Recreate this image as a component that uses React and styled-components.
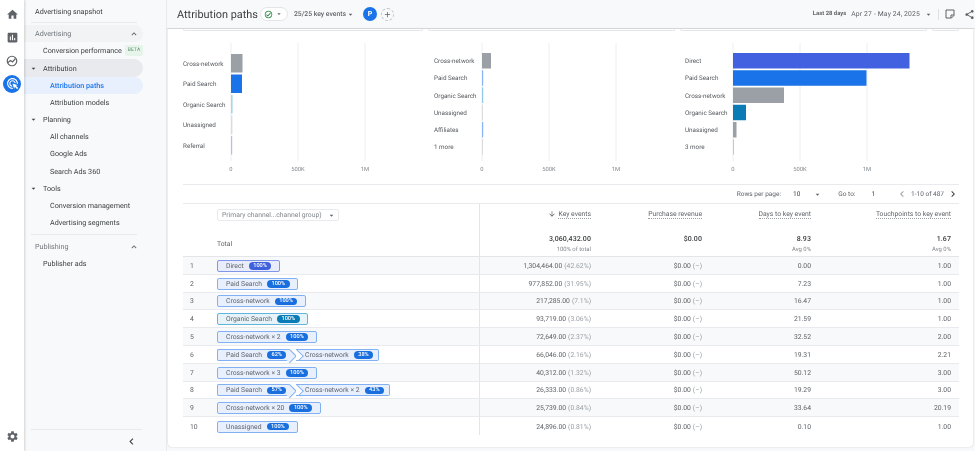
import React from 'react';
import styled, { createGlobalStyle } from 'styled-components';
import {
  MdHome,
  MdAssessment,
  MdAdsClick,
  MdSettings,
  MdChevronLeft,
  MdChevronRight,
  MdExpandLess,
  MdArrowDropDown,
  MdArrowDownward,
  MdAdd,
  MdOutlineCheckCircle,
  MdShare,
} from 'react-icons/md';

const GlobalStyle = createGlobalStyle`
  html, body { margin: 0; padding: 0; background: #f8f9fa; }
  body {
    font-family: Roboto, "Liberation Sans", sans-serif;
    color: #3c4043;
    text-rendering: geometricPrecision;
  }
  * { box-sizing: border-box; }
`;

const NAV = [
  { type: 'section', label: 'Advertising' },
  { type: 'link', label: 'Conversion performance', beta: true },
  { type: 'group', label: 'Attribution', active: true },
  { type: 'sub', label: 'Attribution paths', selected: true },
  { type: 'sub', label: 'Attribution models' },
  { type: 'group', label: 'Planning' },
  { type: 'sub', label: 'All channels' },
  { type: 'sub', label: 'Google Ads' },
  { type: 'sub', label: 'Search Ads 360' },
  { type: 'group', label: 'Tools' },
  { type: 'sub', label: 'Conversion management' },
  { type: 'sub', label: 'Advertising segments' },
];

const CHARTS = [
  {
    rowTop: 23,
    step: 20.5,
    barH: 18.5,
    bars: [
      ['Cross-network', 11.5, '#9aa0a6'],
      ['Paid Search', 11, '#1a73e8'],
      ['Organic Search', 1.6, '#a8d5ec'],
      ['Unassigned', 1.4, '#dadce0'],
      ['Referral', 1.2, '#c5b5f0'],
    ],
  },
  {
    rowTop: 22,
    step: 17.25,
    barH: 15.5,
    bars: [
      ['Cross-network', 9, '#9aa0a6'],
      ['Paid Search', 1.2, '#8ab4f8'],
      ['Organic Search', 1.2, '#90c8e8'],
      ['Unassigned', 1, '#dadce0'],
      ['Affiliates', 1.2, '#8ab4f8'],
      ['1 more', 1, '#dadce0'],
    ],
  },
  {
    rowTop: 22,
    step: 17.25,
    barH: 15.5,
    bars: [
      ['Direct', 176.5, '#4161e0'],
      ['Paid Search', 133.5, '#1a73e8'],
      ['Cross-network', 51, '#9aa0a6'],
      ['Organic Search', 13, '#0b7bb5'],
      ['Unassigned', 3.5, '#9aa0a6'],
      ['3 more', 1, '#c4c7cc'],
    ],
  },
];

const ROWS = [
  { path: [{ label: 'Direct', pct: 100, tone: 'direct' }], key: '1,304,464.00', share: '42.62%', days: '0.00', touch: '1.00' },
  { path: [{ label: 'Paid Search', pct: 100 }], key: '977,852.00', share: '31.95%', days: '7.23', touch: '1.00' },
  { path: [{ label: 'Cross-network', pct: 100 }], key: '217,285.00', share: '7.1%', days: '16.47', touch: '1.00' },
  { path: [{ label: 'Organic Search', pct: 100, tone: 'organic' }], key: '93,719.00', share: '3.06%', days: '21.59', touch: '1.00' },
  { path: [{ label: 'Cross-network × 2', pct: 100 }], key: '72,649.00', share: '2.37%', days: '32.52', touch: '2.00' },
  { path: [{ label: 'Paid Search', pct: 62 }, { label: 'Cross-network', pct: 38 }], key: '66,046.00', share: '2.16%', days: '19.31', touch: '2.21' },
  { path: [{ label: 'Cross-network × 3', pct: 100 }], key: '40,312.00', share: '1.32%', days: '50.12', touch: '3.00' },
  { path: [{ label: 'Paid Search', pct: 57 }, { label: 'Cross-network × 2', pct: 43 }], key: '26,333.00', share: '0.86%', days: '19.29', touch: '3.00' },
  { path: [{ label: 'Cross-network × 20', pct: 100 }], key: '25,739.00', share: '0.84%', days: '33.64', touch: '20.19' },
  { path: [{ label: 'Unassigned', pct: 100 }], key: '24,896.00', share: '0.81%', days: '0.10', touch: '1.00' },
];

const TONES = {
  direct: { bg: '#e9edfb', line: '#7f97ea', badge: '#3f62dc' },
  paid: { bg: '#e8f0fe', line: '#82b1f3', badge: '#1a6fdf' },
  organic: { bg: '#e6f3f9', line: '#62b4dc', badge: '#0b7bb5' },
};

const Page = styled.div`
  display: flex;
  width: 975px;
  height: 451px;
  overflow: hidden;
  will-change: transform;
`;

const Rail = styled.nav`
  display: flex;
  flex-direction: column;
  align-items: center;
  flex: 0 0 24px;
  padding: 3px 0 7px;
  background: #fff;
  box-shadow: 1px 0 2px rgba(60, 64, 67, 0.2);
  z-index: 2;
`;

const RailSlot = styled.div`
  display: flex;
  align-items: center;
  justify-content: center;
  width: 18px;
  height: 23px;
  color: #5f6368;
  font-size: 13px;
`;

const RailActive = styled.div`
  display: flex;
  align-items: center;
  justify-content: center;
  width: 18px;
  height: 18px;
  margin-top: 2.5px;
  border-radius: 50%;
  background: #1a73e8;
  color: #fff;
  font-size: 13px;
`;

const RailFoot = styled(RailSlot)`
  margin-top: auto;
  height: 16px;
`;

const Sidebar = styled.aside`
  display: flex;
  flex-direction: column;
  flex: 0 0 143px;
  padding-top: 2.9px;
  background: #f8f9fa;
  border-right: 1px solid #e8eaed;
`;

const NavColumn = styled.div`
  width: 119px;
`;

const NavRow = styled.div`
  position: relative;
  display: flex;
  align-items: center;
  height: 17.2px;
  padding-left: ${(p) => p.$indent}px;
  padding-right: 4px;
  border-radius: 0 9px 9px 0;
  font-size: 7.2px;
  color: ${(p) => (p.$selected ? '#1a73e8' : p.$muted ? '#70757a' : '#3c4043')};
  font-weight: ${(p) => (p.$selected ? 500 : 400)};
  background: ${(p) => (p.$selected ? '#e8f0fe' : p.$active ? '#e8eaed' : p.$soft ? '#f1f3f4' : 'transparent')};
  white-space: nowrap;
`;

const NavDivider = styled.div`
  height: 1px;
  margin: ${(p) => p.$margin};
  margin-left: 7px;
  width: 106px;
  background: #e8eaed;
`;

const Caret = styled.span`
  position: absolute;
  left: 5px;
  top: 50%;
  margin-top: -4.5px;
  display: flex;
  font-size: 9px;
  color: #3c4043;
`;

const Beta = styled.span`
  margin-left: auto;
  margin-right: -4px;
  padding: 3px 2.5px;
  border-radius: 2px;
  background: #e6f4ea;
  color: #5f8f70;
  font-size: 5px;
  line-height: 5px;
  letter-spacing: 0.2px;
`;

const Collapse = styled.span`
  margin-left: auto;
  display: flex;
  font-size: 10px;
  color: #5f6368;
`;

const SideFoot = styled.div`
  display: flex;
  justify-content: flex-end;
  align-items: center;
  height: 22px;
  margin-top: auto;
  margin-left: 7px;
  width: 111px;
  border-top: 1px solid #e8eaed;
  padding: 2px 4px 0 0;
  color: #3c4043;
  font-size: 13px;
`;

const Main = styled.main`
  display: flex;
  flex-direction: column;
  flex: 1;
  min-width: 0;
`;

const Header = styled.header`
  display: flex;
  align-items: center;
  flex: 0 0 29px;
  padding: 0 0 0 10px;
  background: #f8f9fa;
  border-bottom: 1px solid #dfe1e5;
`;

const Title = styled.h1`
  margin: 0 2px 0 0;
  font-size: 10.9px;
  font-weight: 400;
  color: #3c4043;
  white-space: nowrap;
`;

const StatusPill = styled.div`
  display: flex;
  align-items: center;
  justify-content: center;
  gap: 2px;
  width: 28px;
  height: 14px;
  border: 1px solid #e3e5e8;
  border-radius: 7px;
  background: #fff;
  color: #188038;
  font-size: 9px;
`;

const GreyCaret = styled.span`
  display: flex;
  color: #5f6368;
  font-size: ${(p) => p.$size || 9}px;
  margin-left: ${(p) => p.$left || 0}px;
`;

const KeyEvents = styled.div`
  display: flex;
  align-items: center;
  margin-left: 6px;
  font-size: 6.8px;
  font-weight: 500;
  color: #5f6368;
  white-space: nowrap;
`;

const Avatar = styled.div`
  display: flex;
  align-items: center;
  justify-content: center;
  width: 14px;
  height: 14px;
  margin-left: 8px;
  border-radius: 50%;
  background: #1a73e8;
  color: #fff;
  font-size: 7px;
  font-weight: 700;
`;

const AddButton = styled.div`
  display: flex;
  align-items: center;
  justify-content: center;
  width: 13px;
  height: 13px;
  margin-left: 4px;
  border: 1px dashed #bdc1c6;
  border-radius: 50%;
  color: #5f6368;
  font-size: 9px;
`;

const DateBlock = styled.div`
  display: flex;
  align-items: center;
  margin-left: auto;
  white-space: nowrap;
`;

const DateHint = styled.span`
  font-size: 5.9px;
  font-weight: 700;
  color: #5f6368;
`;

const DateRange = styled.span`
  margin-left: 5px;
  font-size: 6.8px;
  letter-spacing: 0.15px;
  color: #5f6368;
`;

const HeaderDivider = styled.span`
  width: 1px;
  height: 11px;
  margin: 0 6px 0 5px;
  background: #e0e0e0;
`;

const HeaderIcon = styled.span`
  display: flex;
  color: #5f6368;
  margin-right: ${(p) => p.$right || 0}px;
`;

const Card = styled.section`
  flex: 1;
  min-height: 0;
  margin: 0 2px 4px 1px;
  padding: 0 14px 0 15px;
  background: #fff;
  border-radius: 0 0 4px 4px;
  box-shadow: 0 0 1.5px rgba(60, 64, 67, 0.3);
`;

const Remnants = styled.div`
  display: flex;
  gap: 5px;
  height: 2px;
`;

const Remnant = styled.div`
  flex: 0 0 ${(p) => p.$width}px;
  border: 1px solid #e3e5e8;
  border-top: 0;
  border-radius: 0 0 3px 3px;
`;

const ChartRow = styled.div`
  display: grid;
  grid-template-columns: repeat(3, 251px);
  height: 154px;
  border-bottom: 1px solid #e8eaed;
`;

const ChartLabel = styled.text`
  font-size: 6.3px;
  fill: #55595e;
  font-family: Roboto, sans-serif;
`;

const TickLabel = styled.text`
  font-size: 5.8px;
  fill: #80868b;
  font-family: Roboto, sans-serif;
`;

function BarChart({ rowTop, step, barH, bars }) {
  const axis = 48;
  const ticks = [
    [0, '0'],
    [67, '500K'],
    [134, '1M'],
  ];
  return (
    <svg width="251" height="153">
      {ticks.map(([x, label]) => (
        <g key={label}>
          <line x1={axis + x} x2={axis + x} y1="12" y2="130" stroke="#eceef0" strokeWidth="1" />
          <TickLabel x={axis + x} y="140" textAnchor="middle">
            {label}
          </TickLabel>
        </g>
      ))}
      {bars.map(([label, width, color], i) => (
        <g key={label}>
          <ChartLabel x="0" y={rowTop + i * step + barH / 2 + 2.3}>
            {label}
          </ChartLabel>
          <rect x={axis} y={rowTop + i * step} width={width} height={barH} fill={color} />
        </g>
      ))}
    </svg>
  );
}

const Pager = styled.div`
  display: flex;
  align-items: center;
  justify-content: flex-end;
  height: 19px;
  border-bottom: 1px solid #e8eaed;
  font-size: 6.5px;
  color: #5f6368;
  white-space: nowrap;
`;

const PagerText = styled.span`
  margin-left: ${(p) => p.$left || 0}px;
  color: ${(p) => p.$color || '#5f6368'};
`;

const PagerIcon = styled.span`
  display: flex;
  font-size: 12px;
  color: ${(p) => p.$color};
  margin-left: ${(p) => p.$left || 0}px;
`;

const columns = '297px 119px 111px 109px 140px';

const HeadRow = styled.div`
  display: grid;
  grid-template-columns: ${columns};
  height: 53px;
  border-bottom: 1px solid #e3e5e8;
`;

const DimHead = styled.div`
  display: flex;
  flex-direction: column;
  align-items: flex-start;
  padding: 5px 0 0 34px;
  border-right: 1px solid #e3e5e8;
`;

const DimSelect = styled.div`
  display: flex;
  align-items: center;
  justify-content: space-between;
  width: 122px;
  height: 12px;
  padding: 0 2px 0 4px;
  border: 1px solid #e8eaed;
  border-radius: 2px;
  font-size: 6.8px;
  color: #80868b;
`;

const TotalLabel = styled.div`
  margin-top: 19px;
  font-size: 6.8px;
  color: #5f6368;
`;

const MetricHead = styled.div`
  display: flex;
  flex-direction: column;
  align-items: flex-end;
  padding: 5px 8px 0 0;
`;

const MetricTitle = styled.div`
  display: flex;
  align-items: center;
  height: 10px;
  font-size: 6.8px;
  color: #5f6368;
  white-space: nowrap;
  border-bottom: 1px dotted #9aa0a6;
`;

const SortIcon = styled.span`
  position: absolute;
  margin-left: -10px;
  display: flex;
  font-size: 8px;
  color: #5f6368;
`;

const MetricTotal = styled.div`
  margin-top: 16px;
  font-size: 7px;
  font-weight: 500;
  color: #3c4043;
  letter-spacing: 0.1px;
`;

const MetricSub = styled.div`
  margin-top: 4px;
  font-size: 5.9px;
  color: #80868b;
`;

const Row = styled.div`
  display: grid;
  grid-template-columns: ${columns};
  height: 17.8px;
  background: ${(p) => (p.$odd ? '#f8f9fa' : '#fff')};
  border-bottom: ${(p) => (p.$last ? '0' : '1px solid #e8eaed')};
`;

const PathCell = styled.div`
  display: flex;
  align-items: center;
  padding: 1px 0 0 7px;
  border-right: 1px solid #e3e5e8;
  font-size: 6.8px;
`;

const Rank = styled.span`
  flex: 0 0 27px;
  color: #5f6368;
`;

const Segments = styled.div`
  display: flex;
  align-items: center;
`;

const Segment = styled.div`
  position: relative;
  display: flex;
  align-items: center;
  height: 12px;
  padding: 0 ${(p) => (p.$arrow ? 4 : p.$notch ? 5 : 7.5)}px 0 ${(p) => (p.$notch ? 8.5 : 8)}px;
  margin-left: ${(p) => (p.$notch ? 6 : 0)}px;
  background: ${(p) => p.$tone.bg};
  border: 1px solid ${(p) => p.$tone.line};
  border-right-width: ${(p) => (p.$arrow ? 0 : 1)}px;
  border-left-width: ${(p) => (p.$notch ? 0 : 1)}px;
  border-radius: ${(p) => (p.$arrow ? '2px 0 0 2px' : p.$notch ? '0 2px 2px 0' : '2px')};
  color: #5f6368;
  white-space: nowrap;
  overflow: ${(p) => (p.$notch ? 'hidden' : 'visible')};

  &::after {
    content: '';
    display: ${(p) => (p.$arrow || p.$notch ? 'block' : 'none')};
    position: absolute;
    top: 0.75px;
    width: 8.5px;
    height: 8.5px;
    transform: rotate(45deg);
    border-top: 1px solid ${(p) => p.$tone.line};
    border-right: 1px solid ${(p) => p.$tone.line};
    background: ${(p) => (p.$arrow ? p.$tone.bg : '#fff')};
    ${(p) => (p.$arrow ? 'right: -4.25px;' : 'left: -4.25px;')}
  }
`;

const Badge = styled.span`
  display: flex;
  align-items: center;
  justify-content: center;
  position: relative;
  z-index: 1;
  height: 7.7px;
  margin-left: 5px;
  padding: 0 4.5px;
  border-radius: 4px;
  background: ${(p) => p.$color};
  color: #fff;
  font-size: 5.6px;
  font-weight: 500;
`;

const ValueCell = styled.div`
  display: flex;
  align-items: center;
  justify-content: flex-end;
  padding: 1px 8px 0 0;
  font-size: 6.8px;
  color: #5f6368;
  white-space: nowrap;
`;

const Share = styled.span`
  margin-left: 2px;
  color: #9aa0a6;
`;

function PathChips({ path }) {
  return (
    <Segments>
      {path.map((seg, i) => {
        const tone = TONES[seg.tone] || TONES.paid;
        return (
          <Segment key={seg.label} $tone={tone} $arrow={path.length > 1 && i === 0} $notch={i > 0}>
            {seg.label}
            <Badge $color={tone.badge}>{seg.pct}%</Badge>
          </Segment>
        );
      })}
    </Segments>
  );
}

function NavItem({ item }) {
  if (item.type === 'section') {
    return (
      <NavRow $indent={11} $soft $muted>
        {item.label}
        <Collapse>
          <MdExpandLess />
        </Collapse>
      </NavRow>
    );
  }
  const indent = item.type === 'sub' ? 26 : 19;
  return (
    <NavRow $indent={indent} $active={item.active} $selected={item.selected}>
      {item.type === 'group' && (
        <Caret>
          <MdArrowDropDown />
        </Caret>
      )}
      {item.label}
      {item.beta && <Beta>BETA</Beta>}
    </NavRow>
  );
}

function App() {
  return (
    <>
      <GlobalStyle />
      <Page>
        <Rail>
          <RailSlot>
            <MdHome />
          </RailSlot>
          <RailSlot>
            <MdAssessment />
          </RailSlot>
          <RailSlot>
            <svg width="12" height="12" viewBox="0 0 24 24" fill="none" stroke="#5f6368" strokeWidth="2.4">
              <circle cx="12" cy="12" r="9.5" />
              <path d="M4 15l5-4 4 3 6-7" />
            </svg>
          </RailSlot>
          <RailActive>
            <MdAdsClick />
          </RailActive>
          <RailFoot>
            <MdSettings />
          </RailFoot>
        </Rail>

        <Sidebar>
          <NavColumn>
            <NavRow $indent={11}>Advertising snapshot</NavRow>
            <NavDivider $margin="2px 0" />
            {NAV.map((item) => (
              <NavItem key={item.label} item={item} />
            ))}
            <NavDivider $margin="3px 0 2.6px" />
            <NavRow $indent={11} $muted>
              Publishing
              <Collapse>
                <MdExpandLess />
              </Collapse>
            </NavRow>
            <NavRow $indent={19}>Publisher ads</NavRow>
          </NavColumn>
          <SideFoot>
            <MdChevronLeft />
          </SideFoot>
        </Sidebar>

        <Main>
          <Header>
            <Title>Attribution paths</Title>
            <StatusPill>
              <MdOutlineCheckCircle />
              <GreyCaret $size={8}>
                <MdArrowDropDown />
              </GreyCaret>
            </StatusPill>
            <KeyEvents>
              25/25 key events
              <GreyCaret>
                <MdArrowDropDown />
              </GreyCaret>
            </KeyEvents>
            <Avatar>P</Avatar>
            <AddButton>
              <MdAdd />
            </AddButton>
            <DateBlock>
              <DateHint>Last 28 days</DateHint>
              <DateRange>Apr 27 - May 24, 2025</DateRange>
              <GreyCaret $left={4}>
                <MdArrowDropDown />
              </GreyCaret>
            </DateBlock>
            <HeaderDivider />
            <HeaderIcon $right={9}>
              <svg width="10" height="10" viewBox="0 0 20 20" fill="none" stroke="#5f6368" strokeWidth="2">
                <path d="M2 2h16v11l-5 5H2z" />
                <path d="M12 18v-6h6" />
              </svg>
            </HeaderIcon>
            <HeaderIcon>
              <MdShare size={11} />
            </HeaderIcon>
          </Header>

          <Card>
            <Remnants>
              <Remnant $width={240} />
              <Remnant $width={247} />
              <Remnant $width={247} />
              <Remnant $width={27} />
            </Remnants>
            <ChartRow>
              {CHARTS.map((chart) => (
                <BarChart key={chart.bars[1].label + chart.bars[4].label} {...chart} />
              ))}
            </ChartRow>

            <Pager>
              <PagerText>Rows per page:</PagerText>
              <PagerText $left={12} $color="#3c4043">
                10
              </PagerText>
              <GreyCaret $left={13}>
                <MdArrowDropDown />
              </GreyCaret>
              <PagerText $left={16}>Go to:</PagerText>
              <PagerText $left={16} $color="#3c4043">
                1
              </PagerText>
              <PagerIcon $left={21} $color="#9aa0a6">
                <MdChevronLeft />
              </PagerIcon>
              <PagerText $left={3}>1-10 of 487</PagerText>
              <PagerIcon $left={3} $color="#3c4043">
                <MdChevronRight />
              </PagerIcon>
            </Pager>

            <HeadRow>
              <DimHead>
                <DimSelect>
                  Primary channel...channel group)
                  <GreyCaret>
                    <MdArrowDropDown />
                  </GreyCaret>
                </DimSelect>
                <TotalLabel>Total</TotalLabel>
              </DimHead>
              <MetricHead>
                <MetricTitle>
                  <SortIcon>
                    <MdArrowDownward />
                  </SortIcon>
                  Key events
                </MetricTitle>
                <MetricTotal>3,060,432.00</MetricTotal>
                <MetricSub>100% of total</MetricSub>
              </MetricHead>
              <MetricHead>
                <MetricTitle>Purchase revenue</MetricTitle>
                <MetricTotal>$0.00</MetricTotal>
              </MetricHead>
              <MetricHead>
                <MetricTitle>Days to key event</MetricTitle>
                <MetricTotal>8.93</MetricTotal>
                <MetricSub>Avg 0%</MetricSub>
              </MetricHead>
              <MetricHead>
                <MetricTitle>Touchpoints to key event</MetricTitle>
                <MetricTotal>1.67</MetricTotal>
                <MetricSub>Avg 0%</MetricSub>
              </MetricHead>
            </HeadRow>

            {ROWS.map((row, i) => (
              <Row key={row.key} $odd={i % 2 === 0} $last={i === ROWS.length - 1}>
                <PathCell>
                  <Rank>{i + 1}</Rank>
                  <PathChips path={row.path} />
                </PathCell>
                <ValueCell>
                  {row.key}
                  <Share>({row.share})</Share>
                </ValueCell>
                <ValueCell>
                  $0.00<Share>(–)</Share>
                </ValueCell>
                <ValueCell>{row.days}</ValueCell>
                <ValueCell>{row.touch}</ValueCell>
              </Row>
            ))}
          </Card>
        </Main>
      </Page>
    </>
  );
}

export default App;
